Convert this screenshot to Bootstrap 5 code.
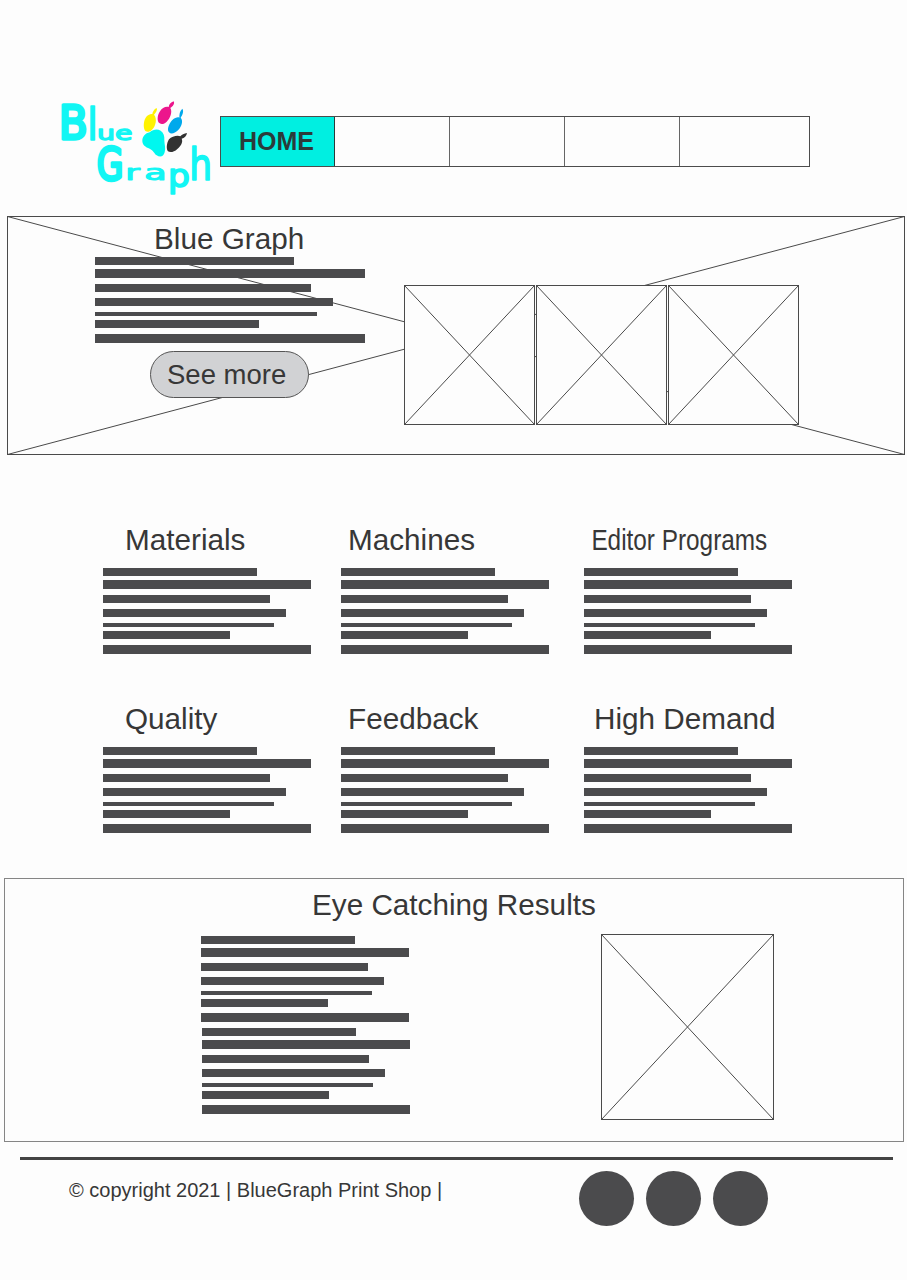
<!DOCTYPE html>
<html lang="en">
<head>
<meta charset="utf-8">
<meta name="viewport" content="width=device-width, initial-scale=1">
<title>Blue Graph</title>
<link href="https://cdn.jsdelivr.net/npm/bootstrap@5.3.0/dist/css/bootstrap.min.css" rel="stylesheet">
<style>
  :root { --ink: #373737; --bar: #4b4b4d; --paper: #fdfdfd; }
  body { background: var(--paper); color: var(--ink); font-family: "Liberation Sans", Arial, sans-serif; overflow-x: hidden; }
  .page { width: 907px; height: 1280px; overflow: hidden; }
  .masthead { height: 216px; padding: 90px 0 0 50px; }
  .logo { width: 170px; height: 120px; }
  .main-nav { width: 590px; height: 51px; margin-top: 26px; border: 1px solid #4c4c4c; }
  .main-nav .nav-link { width: 115px; padding: 0; border-radius: 0; border-right: 1px solid #666; color: #2b3b3a; font-size: 25px; font-weight: 700; line-height: 1; }
  .main-nav .nav-link:first-child { width: 114px; padding-right: 2px; }
  .main-nav .nav-link:last-child { width: 129px; border-right: 0; }
  .main-nav .nav-link.active { background: #00efe1; color: #2b3b3a; border-color: #2b3b3a; }
  .title { font-size: 29.7px; line-height: 30px; font-weight: 400; margin: 0; white-space: nowrap; }
  .condensed { transform: scaleX(.82); transform-origin: 0 0; }
  .cross { display: block; fill: none; stroke: #4a4a4a; stroke-width: 1; }
  .cross rect { fill: var(--paper); }

  .hero { width: 898px; height: 240px; margin-left: 7px; }
  .hero-copy { width: 270px; margin-left: 88px; padding-top: 8px; }
  .hero-copy .title { margin-left: 59px; padding-bottom: 3px; box-sizing: content-box; }
  .see-more { width: 159px; height: 47px; margin: 8px 0 0 55px; padding: 0 0 0 16px; background: #d1d2d4; border: 1px solid #555; color: var(--ink); font-size: 27.5px; line-height: 43px; text-align: left; }
  .gallery { margin: 69px 0 0 39px; gap: 1px; }

  .bars > i { display: block; background: var(--bar); height: 8px; width: 100%; }
  .bars > i:nth-child(1) { width: 73.8%; }
  .bars > i:nth-child(2) { height: 9px; margin-top: 4px; }
  .bars > i:nth-child(3) { width: 80.1%; margin-top: 6px; }
  .bars > i:nth-child(4) { width: 88%; margin-top: 6px; }
  .bars > i:nth-child(5) { width: 82.1%; height: 4px; margin-top: 6px; }
  .bars > i:nth-child(6) { width: 60.9%; margin-top: 4px; }
  .bars > i:nth-child(7) { height: 9px; margin-top: 6px; }

  .features { display: grid; grid-template-columns: 238px 243px 208px; row-gap: 50px; margin: 69px 0 0 103px; }
  .features .bars { width: 208px; margin-top: 13px; }
  .features .title { padding-left: 22px; }
  .features .shift-s { padding-left: 7px; }
  .features .condensed { padding-left: 9px; }
  .features .shift-m { padding-left: 10px; }

  .results { width: 900px; height: 264px; margin: 45px 0 0 4px; border: 1px solid #858585; padding-top: 11px; }
  .results .title { margin-left: 307px; }
  .results .bars { width: 208px; }
  .results-body { padding: 14px 0 0 196px; }
  .results-copy { width: 400px; padding-top: 2px; }
  .results-copy .bars + .bars { margin: 6px 0 0 1px; }
  .foot-rule { width: 873px; height: 3px; margin: 15px 0 0 20px; background: #444; }
  .foot { padding: 10px 0 0 69px; }
  .copyright { font-size: 20px; line-height: 20px; width: 510px; padding-top: 10px; white-space: nowrap; }
  .dots { gap: 12px; padding-top: 1px; }
  .dot { width: 55px; height: 55px; background: var(--bar); }
</style>
</head>
<body>
<div class="page d-flex flex-column">
  <header class="masthead d-flex align-items-start flex-shrink-0">
    <svg class="logo flex-shrink-0" viewBox="0 0 510 360" role="img" aria-label="Blue Graph">
      <g font-family="DejaVu Sans, sans-serif" fill="#12f6f4" stroke="#12f6f4" stroke-width="5" stroke-linejoin="round">
        <text transform="translate(26 148) scale(.93 1)" font-size="136" stroke-width="10">B</text>
        <text transform="translate(112 149) scale(.85 1)" font-size="134">l</text>
        <text transform="translate(141 149) scale(1.42 1)" font-size="60" stroke-width="4">ue</text>
        <text transform="translate(140 270) scale(.77 1)" font-size="134" stroke-width="10">G</text>
        <text transform="translate(226 271) scale(1.75 1)" font-size="61" stroke-width="3">r</text>
        <text transform="translate(283 271) scale(1.8 1)" font-size="61" stroke-width="3">a</text>
        <text transform="translate(354 292) scale(1.1 1)" font-size="94">p</text>
        <text transform="translate(418 271) scale(.82 1)" font-size="132">h</text>
      </g>
      <path fill="#00f7ef" d="M277 153C277 139 286 130 299 127C309 119 321 116 332 122C341 128 344 139 343 150C343 163 348 174 344 187C341 200 330 203 320 196C312 190 310 181 299 176C286 172 277 164 277 153Z"/>
      <path fill="#fff200" d="M287 124C279 116 280 94 287 83C292 75 301 71 307 72C308 66 312 57 320 54C323 60 318 68 312 74C322 85 318 108 306 119C300 125 293 127 287 124Z"/>
      <path fill="#ec168c" d="M329 100C320 94 322 76 329 65C336 53 348 48 356 51C357 43 362 38 371 34C375 41 369 49 361 54C368 65 361 85 350 95C343 102 335 104 329 100Z"/>
      <path fill="#00a9ec" d="M357 127C350 120 356 101 367 90C375 83 384 80 388 83C388 72 389 63 397 56C402 63 398 74 392 83C400 91 396 108 384 121C375 130 363 134 357 127Z"/>
      <path fill="#323232" d="M354 184C348 177 350 158 357 148C365 139 383 135 391 139C394 134 403 130 411 129C410 138 403 144 395 146C400 157 392 168 382 177C372 187 360 188 354 184Z"/>
    </svg>
    <nav class="main-nav nav flex-nowrap flex-shrink-0">
      <a class="nav-link active d-flex align-items-center justify-content-center" href="#">HOME</a>
      <a class="nav-link" href="#" aria-label="Page 2"></a>
      <a class="nav-link" href="#" aria-label="Page 3"></a>
      <a class="nav-link" href="#" aria-label="Page 4"></a>
      <a class="nav-link" href="#" aria-label="Page 5"></a>
    </nav>
  </header>

  <section class="hero position-relative flex-shrink-0">
    <svg class="cross position-absolute top-0 start-0" width="898" height="240"><rect x=".5" y=".5" width="897" height="238"/><path d="M.5 .5L897.5 238.5M.5 238.5L897.5 .5"/></svg>
    <div class="position-relative d-flex align-items-start">
      <div class="hero-copy flex-shrink-0">
        <h1 class="title">Blue Graph</h1>
        <div class="bars"><i></i><i></i><i></i><i></i><i></i><i></i><i></i></div>
        <button class="see-more btn rounded-pill d-block" type="button">See more</button>
      </div>
      <div class="gallery d-flex">
        <svg class="cross" width="131" height="140"><rect x=".5" y=".5" width="130" height="139"/><path d="M.5 .5L130.5 139.5M.5 139.5L130.5 .5"/></svg>
        <svg class="cross" width="131" height="140"><rect x=".5" y=".5" width="130" height="139"/><path d="M.5 .5L130.5 139.5M.5 139.5L130.5 .5"/></svg>
        <svg class="cross" width="131" height="140"><rect x=".5" y=".5" width="130" height="139"/><path d="M.5 .5L130.5 139.5M.5 139.5L130.5 .5"/></svg>
      </div>
    </div>
  </section>

  <section class="features flex-shrink-0">
    <article><h2 class="title">Materials</h2><div class="bars"><i></i><i></i><i></i><i></i><i></i><i></i><i></i></div></article>
    <article><h2 class="title shift-s">Machines</h2><div class="bars"><i></i><i></i><i></i><i></i><i></i><i></i><i></i></div></article>
    <article><h2 class="title condensed">Editor Programs</h2><div class="bars"><i></i><i></i><i></i><i></i><i></i><i></i><i></i></div></article>
    <article><h2 class="title">Quality</h2><div class="bars"><i></i><i></i><i></i><i></i><i></i><i></i><i></i></div></article>
    <article><h2 class="title shift-s">Feedback</h2><div class="bars"><i></i><i></i><i></i><i></i><i></i><i></i><i></i></div></article>
    <article><h2 class="title shift-m">High Demand</h2><div class="bars"><i></i><i></i><i></i><i></i><i></i><i></i><i></i></div></article>
  </section>

  <section class="results flex-shrink-0">
    <h2 class="title">Eye Catching Results</h2>
    <div class="results-body d-flex">
      <div class="results-copy">
        <div class="bars"><i></i><i></i><i></i><i></i><i></i><i></i><i></i></div>
        <div class="bars"><i></i><i></i><i></i><i></i><i></i><i></i><i></i></div>
      </div>
      <svg class="cross" width="173" height="186"><rect x=".5" y=".5" width="172" height="185"/><path d="M.5 .5L172.5 185.5M.5 185.5L172.5 .5"/></svg>
    </div>
  </section>

  <div class="foot-rule flex-shrink-0"></div>
  <footer class="foot d-flex">
    <div class="copyright flex-shrink-0">© copyright 2021 | BlueGraph Print Shop |</div>
    <div class="dots d-flex">
      <span class="dot rounded-circle"></span><span class="dot rounded-circle"></span><span class="dot rounded-circle"></span>
    </div>
  </footer>
</div>
<script src="https://cdn.jsdelivr.net/npm/bootstrap@5.3.0/dist/js/bootstrap.bundle.min.js"></script>
</body>
</html>
